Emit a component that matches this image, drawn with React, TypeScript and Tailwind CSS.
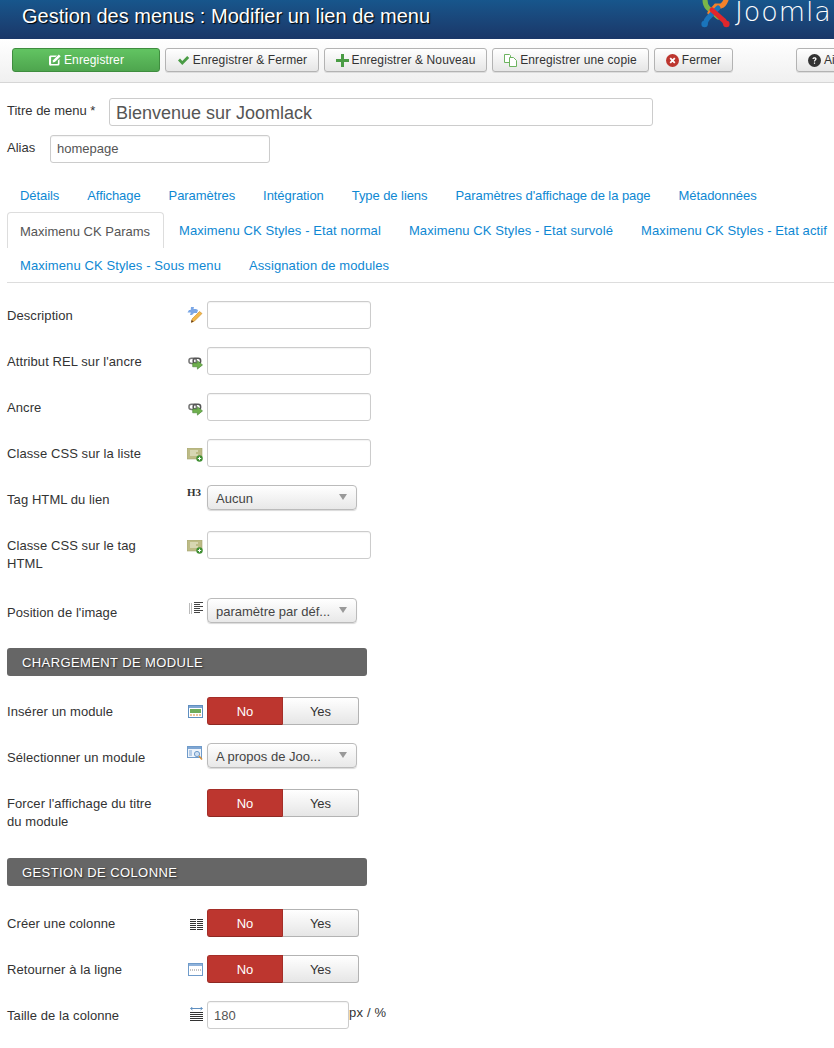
import React from 'react';

const IconEdit = () => (
  <svg width="14" height="14" viewBox="0 0 14 14" className="shrink-0">
    <path d="M2.5 2.5h6.5l-1.6 1.6H3.6a.5.5 0 0 0-.5.5v5.8c0 .3.2.5.5.5h5.8c.3 0 .5-.2.5-.5V7.6l1.6-1.6v5a1.6 1.6 0 0 1-1.6 1.6h-7A1.6 1.6 0 0 1 1 11V4a1.6 1.6 0 0 1 1.5-1.5z" fill="#fff" />
    <path d="M5 7.2 10.8 1.4l1.9 1.9L6.9 9.1 4.6 9.6z" fill="#fff" />
  </svg>
);

const IconCheck = () => (
  <svg width="13" height="11" viewBox="0 0 13 11" className="shrink-0">
    <path d="M1 5.5 3 3.6l2.3 2.3L10.2 1l2 1.9-6.9 7z" fill="#4a9c45" />
  </svg>
);

const IconPlus = () => (
  <svg width="13" height="13" viewBox="0 0 13 13" className="shrink-0">
    <path d="M5 0h3v5h5v3H8v5H5V8H0V5h5z" fill="#4a9c45" />
  </svg>
);

const IconCopy = () => (
  <svg width="13" height="13" viewBox="0 0 13 13" fill="none" className="shrink-0">
    <path d="M.5.5h5l1 1v7h-6z" stroke="#6cb35f" fill="#fff" />
    <path d="M5.5 3.5h4l3 3v6h-7z" stroke="#6cb35f" fill="#fff" />
  </svg>
);

const IconClose = () => (
  <svg width="13" height="13" viewBox="0 0 13 13" className="shrink-0">
    <circle cx="6.5" cy="6.5" r="6.5" fill="#bd362f" />
    <path d="M4.2 4.2l4.6 4.6M8.8 4.2l-4.6 4.6" stroke="#fff" strokeWidth="1.8" />
  </svg>
);

const IconHelp = () => (
  <svg width="13" height="13" viewBox="0 0 13 13" className="shrink-0">
    <circle cx="6.5" cy="6.5" r="6.5" fill="#333" />
    <path d="M4.4 5c.1-1.2 1-1.8 2.1-1.8 1.2 0 2.1.7 2.1 1.7 0 1.4-1.6 1.4-1.6 2.6H5.9c0-1.7 1.3-1.7 1.3-2.5 0-.4-.3-.6-.7-.6-.5 0-.8.3-.8.7z" fill="#fff" />
    <rect x="5.9" y="8.5" width="1.2" height="1.3" fill="#fff" />
  </svg>
);

const JoomlaMark = () => (
  <svg width="29" height="28" viewBox="0 0 29 28" fill="none" strokeWidth="5" strokeLinecap="round" className="shrink-0">
    <path d="M4 0Q4 5 7 8L17 17" stroke="#7ab648" />
    <path d="M25 0Q23 5 20 6L15 6 9 13" stroke="#f4822a" />
    <path d="M4 24Q5 20 7 18L17 8" stroke="#1a74bb" />
    <path d="M25 24Q23 20 21 19L11 10" stroke="#e0272d" />
    <circle cx="3.6" cy="24" r="3.2" fill="#1a74bb" />
    <circle cx="25.4" cy="24" r="3.2" fill="#e0272d" />
  </svg>
);

const PencilIcon = () => (
  <svg width="16" height="16" viewBox="0 0 16 16">
    <path d="M4 0h3l-.5 2H9l2 1-1 3H7L5 8H3l.8-2.4H.5L2 3h1.7z" fill="#7ba7e6" />
    <path d="M5 12 12.5 4.5l2.5 2L7.5 14l-3 1.5z" fill="#f2b84b" stroke="#c8892a" strokeWidth=".6" />
    <path d="M4.6 13l-.6 2.5 2.6-.9z" fill="#5b3a1e" />
  </svg>
);

const LinkIcon = () => (
  <svg width="15" height="13" viewBox="0 0 16 13" fill="none">
    <rect x="1" y="1" width="8" height="5.5" rx="2.7" stroke="#777" strokeWidth="1.6" />
    <rect x="5.5" y="1" width="8" height="5.5" rx="2.7" stroke="#555" strokeWidth="1.6" />
    <path d="M5 6h5V3.5L15.5 8 10 12.5V10H5z" fill="#6fb04e" stroke="#3f7d2d" strokeWidth=".6" />
  </svg>
);

const CssIcon = () => (
  <svg width="16" height="14" viewBox="0 0 16 14">
    <rect x="0" y="0" width="15" height="11" fill="#bdbb86" stroke="#a5a36f" strokeWidth=".6" />
    <path d="M3 3h8M3 5h6M3 7h8" stroke="#f2f2e0" strokeWidth="1" />
    <circle cx="12.5" cy="10.5" r="3.2" fill="#3f8f32" />
    <path d="M12.5 8.8v3.4M10.8 10.5h3.4" stroke="#fff" strokeWidth="1" />
  </svg>
);

const ListIcon = () => (
  <svg width="14" height="13" viewBox="0 0 14 13" fill="none">
    <path d="M.5 1v11M2.5 1v11" stroke="#bbb" />
    <path d="M5 .5h9M5 2.5h6M5 4.5h9M5 6.5h6M5 8.5h9M5 10.5h6" stroke="#444" />
  </svg>
);

const ModuleIcon = () => (
  <svg width="15" height="13" viewBox="0 0 15 13">
    <rect x=".5" y=".5" width="14" height="12" fill="#fff" stroke="#5f8fc0" />
    <rect x="1" y="1" width="13" height="2" fill="#7fa6d3" />
    <rect x="2" y="4" width="11" height="4" fill="#6dab5b" />
    <path d="M2 10h11" stroke="#d98a3a" strokeDasharray="2 1" />
  </svg>
);

const ModuleSearchIcon = () => (
  <svg width="16" height="15" viewBox="0 0 16 15" fill="none">
    <rect x=".5" y=".5" width="14" height="11" fill="#eef4fb" stroke="#6f9bca" />
    <rect x="1" y="1" width="13" height="2" fill="#7fa6d3" />
    <path d="M2 5h3M2 7h3M2 9h3" stroke="#7fa6d3" />
    <circle cx="10" cy="8" r="2.6" fill="#cfe0f2" stroke="#6f9bca" />
    <path d="M12 10l3 3.5" stroke="#d3913e" strokeWidth="1.5" />
  </svg>
);

const ColumnsIcon = () => (
  <svg width="13" height="12" viewBox="0 0 13 12" fill="none">
    <path d="M0 .5h6M0 2.5h6M0 4.5h6M0 6.5h6M0 8.5h6M0 10.5h6M7 .5h6M7 2.5h6M7 4.5h6M7 6.5h6M7 8.5h6M7 10.5h6" stroke="#333" />
  </svg>
);

const BreakIcon = () => (
  <svg width="15" height="13" viewBox="0 0 15 13">
    <rect x=".5" y=".5" width="14" height="12" fill="#fff" stroke="#6f9bca" />
    <rect x="1" y="1" width="13" height="2" fill="#8fb2da" />
    <path d="M2 7h11" stroke="#888" strokeDasharray="1 1" />
  </svg>
);

const WidthIcon = () => (
  <svg width="13" height="14" viewBox="0 0 13 14" fill="none">
    <path d="M1 1.5h11" stroke="#5f8fc0" />
    <path d="M2.5 0 .5 1.5l2 1.5M10.5 0l2 1.5-2 1.5" stroke="#5f8fc0" />
    <path d="M0 5.5h13M0 7.5h13M0 9.5h13M0 11.5h13M0 13.5h13" stroke="#333" />
  </svg>
);

const Button = ({ icon, label, className }: { icon: React.ReactNode; label: string; className: string }) => (
  <div className={`h-6 shrink-0 flex items-center justify-center gap-[3px] rounded-[3px] border border-[#b3b3b3] bg-gradient-to-b from-white to-[#e6e6e6] text-[12px] tracking-[0.12px] text-[#333] whitespace-nowrap shadow-[0_1px_0_#ddd] ${className}`}>
    {icon}
    <span>{label}</span>
  </div>
);

const TextInput = ({ value, className }: { value?: string; className: string }) => (
  <div className={`h-7 flex items-center px-[6px] rounded-[3px] border border-[#ccc] bg-white text-[13px] text-[#555] shadow-[inset_0_1px_1px_rgba(0,0,0,0.05)] ${className}`}>
    {value}
  </div>
);

const Select = ({ value }: { value: string }) => (
  <div className="relative w-[150px] h-[25px] flex items-center pl-2 pt-[2px] rounded-[4px] border border-[#bbb] bg-gradient-to-b from-white to-[#e8e8e8] text-[13px] text-[#444] shadow-[0_1px_1px_rgba(0,0,0,0.15)] whitespace-nowrap">
    {value}
    <span className="absolute right-[9px] top-[8px] w-0 h-0 border-x-[4px] border-x-transparent border-t-[6px] border-t-[#999]" />
  </div>
);

const Switch = () => (
  <div className="w-[152px] h-7 flex text-[13px]">
    <div className="w-[76px] flex items-center justify-center pt-[2px] rounded-l-[3px] bg-[#bd362f] border border-[#a52e28] border-b-[#8e2822] text-white">
      No
    </div>
    <div className="flex-1 flex items-center justify-center pt-[2px] rounded-r-[3px] border border-l-0 border-[#b3b3b3] bg-gradient-to-b from-white to-[#e6e6e6] text-[#333]">
      Yes
    </div>
  </div>
);

const Row = ({ label, icon, iconTop, children, className = '' }: { label: React.ReactNode; icon: React.ReactNode; iconTop: string; children: React.ReactNode; className?: string }) => (
  <div className={`flex items-start pl-[7px] ${className}`}>
    <div className="w-[160px] shrink-0 pt-[6px] text-[13px] tracking-[0.08px] leading-[18px] text-[#333]">{label}</div>
    <div className={`w-[40px] shrink-0 pr-[4px] flex justify-end ${iconTop}`}>{icon}</div>
    {children}
  </div>
);

const Section = ({ title, className }: { title: string; className: string }) => (
  <div className={`ml-[7px] w-[360px] h-7 flex items-center pl-[15px] pt-[2px] rounded-[3px] bg-[#666] text-[13px] tracking-[0.4px] text-white [text-shadow:1px_1px_2px_#222] ${className}`}>
    {title}
  </div>
);

const tabs1 = ['Détails', 'Affichage', 'Paramètres', 'Intégration', 'Type de liens', "Paramètres d'affichage de la page", 'Métadonnées'];
const tabs2 = ['Maximenu CK Styles - Etat normal', 'Maximenu CK Styles - Etat survolé', 'Maximenu CK Styles - Etat actif'];
const tabs3 = ['Maximenu CK Styles - Sous menu', 'Assignation de modules'];

const Tab = ({ label, className = 'h-[35px] tracking-[0.1px]' }: { label: string; className?: string }) => (
  <div className={`shrink-0 flex items-center pt-[2px] px-[13px] mr-[2px] text-[13px] text-[#0e88d3] whitespace-nowrap ${className}`}>{label}</div>
);

export default function App() {
  return (
    <div className="w-[834px] h-[1048px] overflow-hidden bg-white font-['Liberation_Sans',Arial,sans-serif]">
      {/* Title bar */}
      <div className="h-[39px] flex justify-between bg-gradient-to-b from-[#17568c] to-[#1a3768]">
        <h1 className="pl-[22px] pt-[4px] text-[20px] leading-[24px] text-white [text-shadow:1px_1px_1px_#000] whitespace-nowrap">
          Gestion des menus : Modifier un lien de menu
        </h1>
        <div className="flex items-start gap-[5px] w-[133px] shrink-0">
          <JoomlaMark />
          <span className="font-['DejaVu_Sans',sans-serif] font-extralight text-[27px] leading-[27px] -mt-[2px] tracking-[0.9px] text-white">Joomla</span>
        </div>
      </div>

      {/* Toolbar */}
      <div className="h-[44px] flex items-start pt-[9px] pl-[12px] gap-[5px] bg-gradient-to-b from-white to-[#f0f0f0] border-b border-[#d6d6d6]">
        <div className="w-[148px] h-6 shrink-0 flex items-center justify-center gap-[2px] rounded-[3px] border border-[#3f8d3f] bg-gradient-to-b from-[#62c462] to-[#4ea54e] text-[12px] tracking-[0.12px] text-white">
          <IconEdit />
          <span>Enregistrer</span>
        </div>
        <Button icon={<IconCheck />} label="Enregistrer & Fermer" className="w-[154px]" />
        <Button icon={<IconPlus />} label="Enregistrer & Nouveau" className="w-[163px]" />
        <Button icon={<IconCopy />} label="Enregistrer une copie" className="w-[157px]" />
        <Button icon={<IconClose />} label="Fermer" className="w-[79px]" />
        <Button icon={<IconHelp />} label="Aide" className="w-[80px] ml-[58px] !justify-start pl-[11px]" />
      </div>

      {/* Title and alias */}
      <div className="flex items-start pl-[7px] pt-[15px]">
        <label className="w-[102px] pt-[4px] text-[13px] leading-[18px] text-[#333]">Titre de menu *</label>
        <div className="w-[544px] h-7 flex items-center px-[6px] pt-[2px] rounded-[3px] border border-[#ccc] bg-white text-[18px] text-[#555]">
          Bienvenue sur Joomlack
        </div>
      </div>
      <div className="flex items-start pl-[7px] mt-[9px]">
        <label className="w-[43px] pt-[4px] text-[13px] leading-[18px] text-[#333]">Alias</label>
        <TextInput value="homepage" className="w-[220px]" />
      </div>

      {/* Tabs */}
      <div className="mt-[14px] ml-[7px] border-b border-[#ddd]">
        <div className="flex">
          {tabs1.map(t => (
            <Tab key={t} label={t} className="h-[35px] tracking-[-0.07px]" />
          ))}
        </div>
        <div className="flex">
          <div className="w-[157px] shrink-0 h-[36px] flex items-center px-[12px] pt-[2px] mr-[2px] rounded-t-[4px] border border-b-0 border-[#ddd] text-[13px] text-[#555] whitespace-nowrap">
            Maximenu CK Params
          </div>
          {tabs2.map(t => (
            <Tab key={t} label={t} />
          ))}
        </div>
        <div className="flex">
          {tabs3.map(t => (
            <Tab key={t} label={t} className="h-[34px] tracking-[0.1px]" />
          ))}
        </div>
      </div>

      {/* Fields */}
      <Row className="mt-[18px]" label="Description" iconTop="pt-[6px]" icon={<PencilIcon />}><TextInput className="w-[164px]" /></Row>
      <Row className="mt-[18px]" label="Attribut REL sur l'ancre" iconTop="pt-[10px]" icon={<LinkIcon />}><TextInput className="w-[164px]" /></Row>
      <Row className="mt-[18px]" label="Ancre" iconTop="pt-[10px]" icon={<LinkIcon />}><TextInput className="w-[164px]" /></Row>
      <Row className="mt-[18px]" label="Classe CSS sur la liste" iconTop="pt-[9px]" icon={<CssIcon />}><TextInput className="w-[164px]" /></Row>
      <Row className="mt-[18px]" label="Tag HTML du lien" iconTop="pt-[2px]" icon={<span className="w-[16px] font-['Liberation_Serif',serif] font-bold text-[11px] leading-[11px] text-[#333]">H3</span>}><Select value="Aucun" /></Row>
      <Row className="mt-[21px]" label={<span className="block w-[140px]">Classe CSS sur le tag HTML</span>} iconTop="pt-[9px]" icon={<CssIcon />}><TextInput className="w-[164px]" /></Row>
      <Row className="mt-[25px]" label="Position de l'image" iconTop="pt-[4px]" icon={<ListIcon />}><Select value="paramètre par déf..." /></Row>

      <Section title="CHARGEMENT DE MODULE" className="mt-[25px]" />
      <Row className="mt-[21px]" label="Insérer un module" iconTop="pt-[8px]" icon={<ModuleIcon />}><Switch /></Row>
      <Row className="mt-[18px]" label="Sélectionner un module" iconTop="pt-[3px]" icon={<ModuleSearchIcon />}><Select value="A propos de Joo..." /></Row>
      <Row className="mt-[21px]" label={<span className="block w-[150px]">Forcer l'affichage du titre du module</span>} iconTop="" icon={null}><Switch /></Row>

      <Section title="GESTION DE COLONNE" className="mt-[27px]" />
      <Row className="mt-[23px]" label="Créer une colonne" iconTop="pt-[10px]" icon={<ColumnsIcon />}><Switch /></Row>
      <Row className="mt-[18px]" label="Retourner à la ligne" iconTop="pt-[8px]" icon={<BreakIcon />}><Switch /></Row>
      <Row className="mt-[18px]" label="Taille de la colonne" iconTop="pt-[6px]" icon={<WidthIcon />}>
        <TextInput value="180" className="w-[142px] pt-[2px]" />
        <span className="pt-[3px] text-[13px] tracking-[0.2px] leading-[18px] text-[#333]">px / %</span>
      </Row>
    </div>
  );
}
